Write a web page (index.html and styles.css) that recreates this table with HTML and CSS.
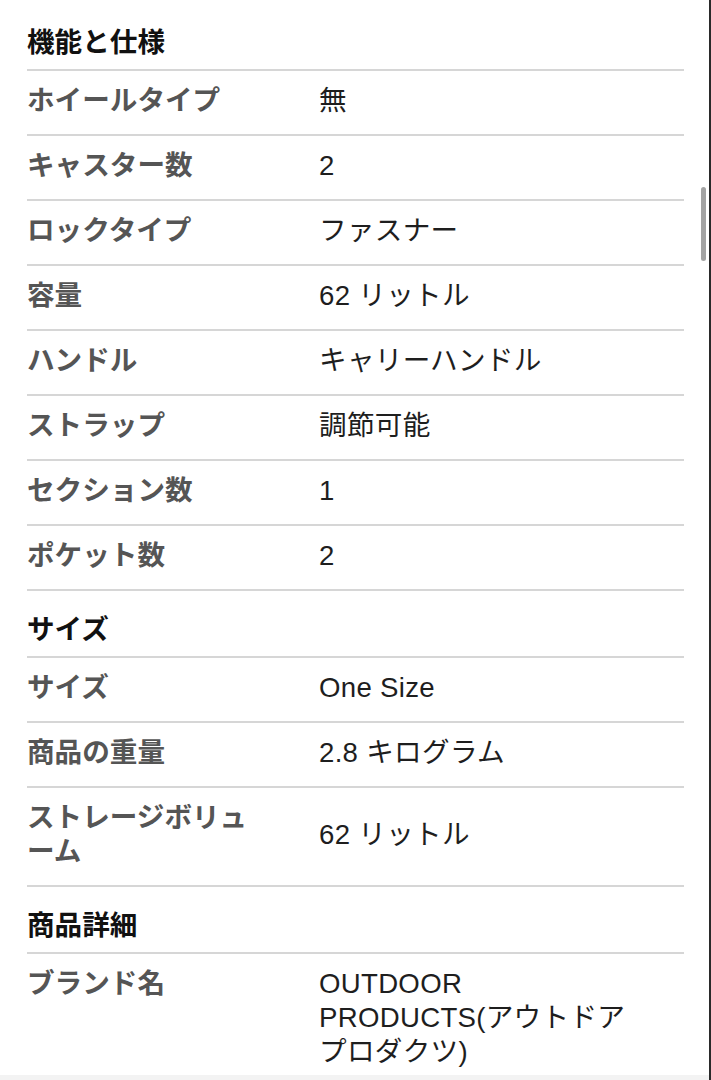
FILE: index.html
```html
<!DOCTYPE html>
<html lang="ja">
<head>
<meta charset="utf-8">
<title>機能と仕様</title>
<link rel="stylesheet" href="styles.css">
</head>
<body>
<div class="page">
  <div class="specs">
    <section class="group">
      <h2 class="group-title">機能と仕様</h2>
      <div class="row"><div class="label">ホイールタイプ</div><div class="value">無</div></div>
      <div class="row"><div class="label">キャスター数</div><div class="value">2</div></div>
      <div class="row"><div class="label">ロックタイプ</div><div class="value">ファスナー</div></div>
      <div class="row"><div class="label">容量</div><div class="value">62 リットル</div></div>
      <div class="row"><div class="label">ハンドル</div><div class="value">キャリーハンドル</div></div>
      <div class="row"><div class="label">ストラップ</div><div class="value">調節可能</div></div>
      <div class="row"><div class="label">セクション数</div><div class="value">1</div></div>
      <div class="row"><div class="label">ポケット数</div><div class="value">2</div></div>
    </section>
    <section class="group">
      <h2 class="group-title">サイズ</h2>
      <div class="row"><div class="label">サイズ</div><div class="value">One Size</div></div>
      <div class="row"><div class="label">商品の重量</div><div class="value">2.8 キログラム</div></div>
      <div class="row"><div class="label">ストレージボリューム</div><div class="value">62 リットル</div></div>
    </section>
    <section class="group">
      <h2 class="group-title">商品詳細</h2>
      <div class="row top"><div class="label">ブランド名</div><div class="value">OUTDOOR PRODUCTS(アウトドアプロダクツ)</div></div>
    </section>
  </div>
  <div class="scrollbar"></div>
  <div class="bottom-fade"></div>
</div>
</body>
</html>
```

FILE: styles.css
```css
html, body {
  margin: 0;
  padding: 0;
  background: #ffffff;
}

body {
  font-family: "Liberation Sans", "Noto Sans CJK JP", sans-serif;
  font-size: 27.6px;
  line-height: 34px;
  color: #222222;
}

.page {
  position: relative;
  width: 711px;
  min-height: 1080px;
  box-sizing: border-box;
  border-right: 2px solid #2a2a2a;
  padding: 4px 0 0 27px;
}

.specs {
  width: 657px;
  display: flex;
  flex-direction: column;
}

.group {
  display: flex;
  flex-direction: column;
  border-bottom: 2px solid #d6d6d6;
}

.group-title {
  margin: 0;
  padding: 22px 0 9px;
  font-size: 27.6px;
  line-height: 34px;
  font-weight: 700;
  color: #111111;
}

.row {
  display: grid;
  grid-template-columns: 236px 320px;
  column-gap: 56px;
  align-items: center;
  border-top: 2px solid #d6d6d6;
  padding: 13px 0 16px;
}

.row.top {
  align-items: start;
}

.label {
  font-weight: 700;
  color: #555555;
}

.value {
  font-weight: 400;
  color: #1e1e1e;
  letter-spacing: 0.3px;
}

.scrollbar {
  position: absolute;
  left: 701px;
  top: 187px;
  width: 5px;
  height: 74px;
  border-radius: 3px;
  background: #a3a3a3;
}

.bottom-fade {
  position: fixed;
  left: 0;
  bottom: 0;
  width: 709px;
  height: 5px;
  background: #f3f3f3;
}
```
